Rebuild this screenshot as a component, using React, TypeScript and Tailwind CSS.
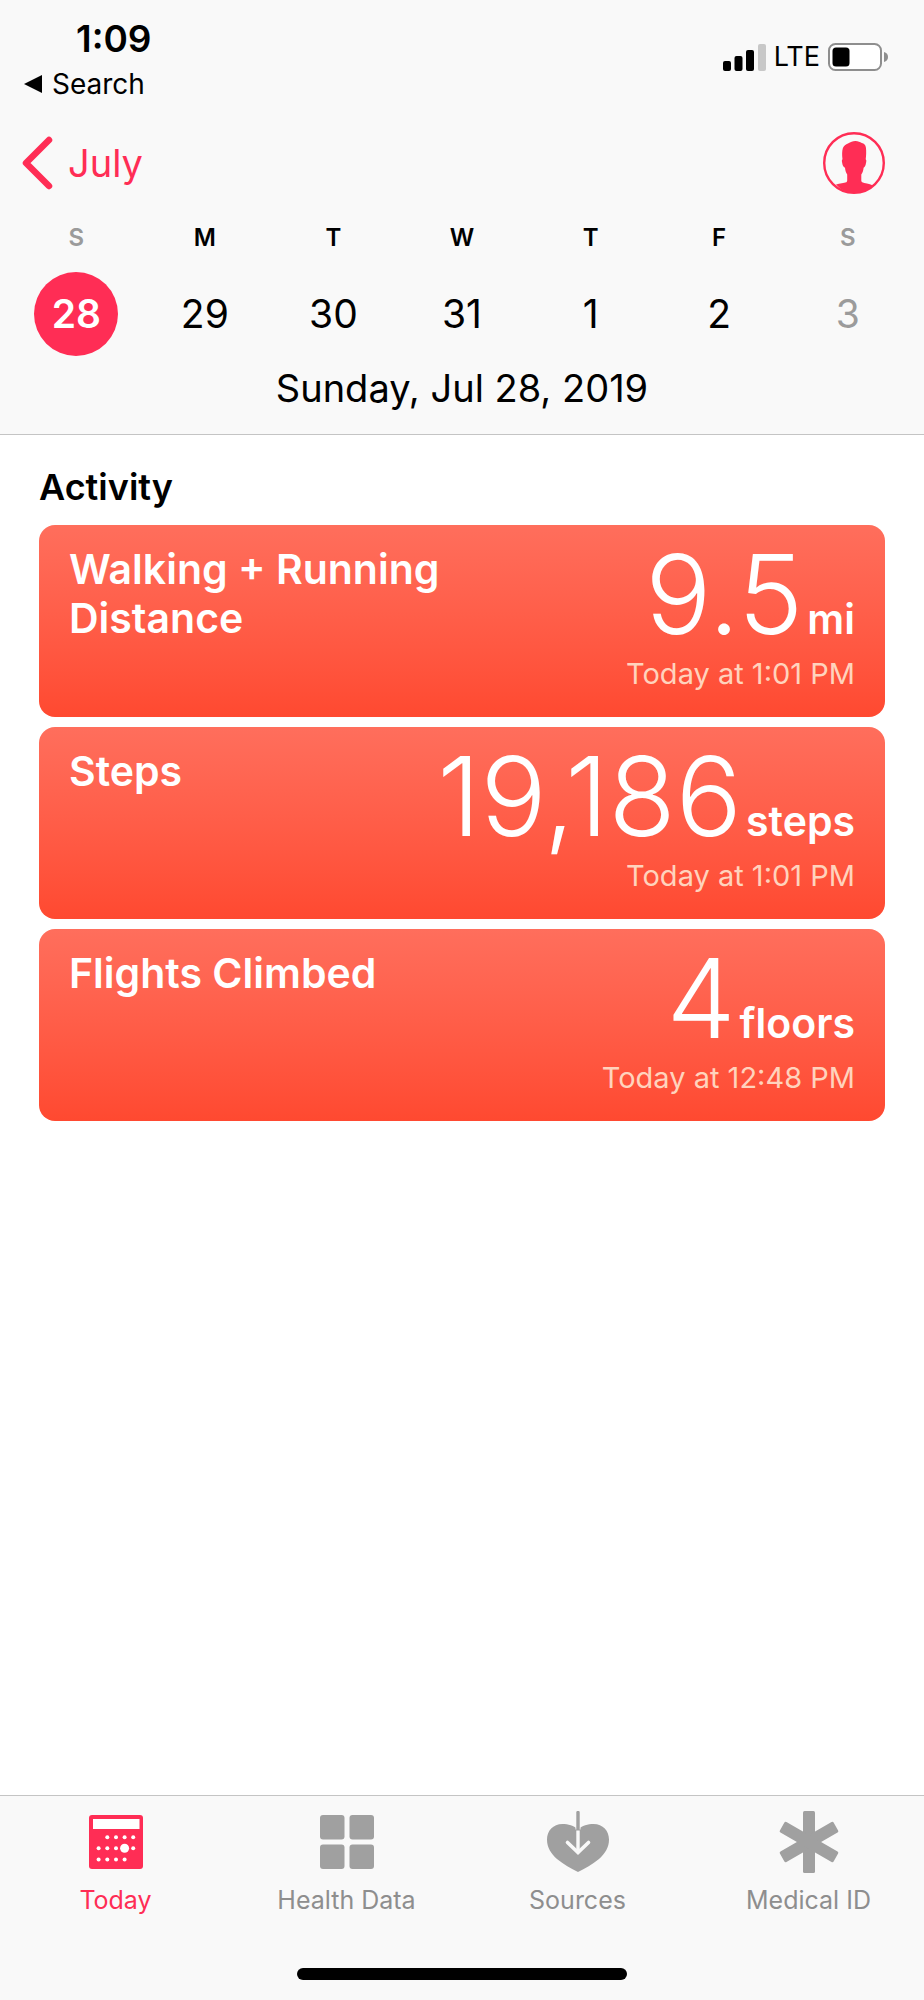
import React, { useState } from 'react';
import { clsx } from 'clsx';

interface Day {
  label: string;
  date: number;
  weekend?: boolean;
}

interface Metric {
  title: string;
  value: string;
  unit: string;
  time: string;
}

const DAYS: Day[] = [
  { label: 'S', date: 28, weekend: true },
  { label: 'M', date: 29 },
  { label: 'T', date: 30 },
  { label: 'W', date: 31 },
  { label: 'T', date: 1 },
  { label: 'F', date: 2 },
  { label: 'S', date: 3, weekend: true },
];

const METRICS: Metric[] = [
  { title: 'Walking + Running Distance', value: '9.5', unit: 'mi', time: 'Today at 1:01 PM' },
  { title: 'Steps', value: '19,186', unit: 'steps', time: 'Today at 1:01 PM' },
  { title: 'Flights Climbed', value: '4', unit: 'floors', time: 'Today at 12:48 PM' },
];

const SignalIcon = () => (
  <svg width="43" height="27" viewBox="0 0 43 27" aria-hidden="true">
    <rect x="0" y="17" width="8" height="10" rx="2" />
    <rect x="11.5" y="12" width="8" height="15" rx="2" />
    <rect x="23" y="6" width="8" height="21" rx="2" />
    <rect x="35" y="0" width="8" height="27" rx="2" fill="#c8c8c8" />
  </svg>
);

const BatteryIcon = () => (
  <svg width="60" height="28" viewBox="0 0 60 28" aria-hidden="true">
    <rect x="1" y="1" width="52" height="26" rx="6.5" fill="#fff" stroke="#8e8e8e" strokeWidth="2" />
    <rect x="4.5" y="4.5" width="17" height="19" rx="3.5" />
    <path d="M56 9c2.6.6 4 2.5 4 5s-1.4 4.4-4 5z" fill="#8e8e8e" />
  </svg>
);

const ProfileIcon = () => (
  <svg width="62" height="62" viewBox="0 0 62 62" aria-hidden="true">
    <circle cx="31" cy="31" r="29.8" fill="none" stroke="#ff2d55" strokeWidth="2.4" />
    <path
      d="M13 52.5c4-1.6 8-1.3 10.3-2.3.8-.4.9-1.2.9-2.2v-5.5c-1.3-2-1.9-4-2.2-6.8-1.7-.8-2.3-2.2-2.7-4.2-.4-1.9-.8-3.3.2-4.2-.5-4.3-.6-8.2.4-11.3 1-2.2 2.8-3.7 5.1-4.5 2.8-1.4 4.8-2.5 7.6-2.4 2.5.1 4.4.9 6.2 2 2.3.3 3.8 2 4.1 4.4.5 4 .3 8-.2 11.8 1 1 .6 2.3.2 4.2-.4 2-.9 3.4-2.3 4.2-.3 2.800-.9 4.800-2.300 6.800v5.500c0 1 .1 1.800.9 2.200 2.300 1 6.800 1.200 10.800 3.200-5 5-11 7.600-18.500 7.600s-14-3.500-18.500-8.500z"
      fill="#ff2d55"
    />
  </svg>
);

const TodayIcon = () => (
  <svg width="54" height="54" viewBox="0 0 54 54" aria-hidden="true">
    <rect width="54" height="54" rx="3" fill="#ff2d55" />
    <rect x="4" y="4" width="46.5" height="10" fill="#fff" />
    <g fill="#fff">
      {[18.3, 27, 35.6, 44.2].map((x) => (
        <circle key={x} cx={x} cy="22.3" r="2" />
      ))}
      {[9.6, 18.3, 27, 44.2].map((x) => (
        <circle key={x} cx={x} cy="33.3" r="2" />
      ))}
      <circle cx="35.6" cy="33.3" r="4.5" />
      {[9.6, 18.3, 27, 35.6].map((x) => (
        <circle key={x} cx={x} cy="44.5" r="2" />
      ))}
    </g>
  </svg>
);

const HealthDataIcon = () => (
  <svg width="54" height="54" viewBox="0 0 54 54" fill="#a0a0a0" aria-hidden="true">
    <rect width="24.5" height="24.5" rx="3" />
    <rect x="29.5" width="24.5" height="24.5" rx="3" />
    <rect y="29.5" width="24.5" height="24.5" rx="3" />
    <rect x="29.5" y="29.5" width="24.5" height="24.5" rx="3" />
  </svg>
);

const SourcesIcon = () => (
  <svg width="62" height="62" viewBox="0 0 62 62" aria-hidden="true">
    <path
      d="M31 18.5C27 14.5 21 13 15.5 13 6 13 0 20 0 28.5c0 8 4 14 10 19.5C16.5 53.5 24 57.5 31 61c7-3.5 14.5-7.5 21-13 6-5.5 10-11.5 10-19.5C62 20 56 13 46.5 13 41 13 35 14.5 31 18.5z"
      fill="#a0a0a0"
    />
    <path d="M31 1.5V18.5" stroke="#f9f9f9" strokeWidth="5" />
    <path d="M31 1.5V18.5" stroke="#a0a0a0" strokeWidth="3.4" strokeLinecap="round" />
    <path d="M31 19.5V41" stroke="#f9f9f9" strokeWidth="3.4" />
    <path d="M20.5 31.5 31 41.5l10.5-10" fill="none" stroke="#f9f9f9" strokeWidth="3.6" strokeLinecap="round" />
  </svg>
);

const MedicalIcon = () => (
  <svg width="62" height="62" viewBox="0 0 62 62" fill="#a0a0a0" aria-hidden="true">
    <rect x="25" y="0" width="12" height="62" rx="1.5" />
    <rect x="25" y="0" width="12" height="62" rx="1.5" transform="rotate(60 31 31)" />
    <rect x="25" y="0" width="12" height="62" rx="1.5" transform="rotate(-60 31 31)" />
  </svg>
);

const TABS = [
  { name: 'Today', icon: <TodayIcon /> },
  { name: 'Health Data', icon: <HealthDataIcon /> },
  { name: 'Sources', icon: <SourcesIcon /> },
  { name: 'Medical ID', icon: <MedicalIcon /> },
];

const MetricCard: React.FC<Metric> = ({ title, value, unit, time }) => (
  <article className="flex min-h-48 justify-between rounded-2xl bg-linear-to-b from-[#ff6e5c] to-[#ff4930] px-[30px] pt-5 text-white">
    <h3 className="max-w-[400px] text-[41px] leading-[49px] font-semibold">{title}</h3>
    <div className="pt-3.5 text-right whitespace-nowrap">
      <p className="flex items-baseline justify-end gap-1 leading-[70px]">
        <span className="text-[110px] font-light">{value}</span>
        <span className="text-[41px] font-semibold">{unit}</span>
      </p>
      <p className="text-[29px] leading-10 text-[#ffd3bd]">{time}</p>
    </div>
  </article>
);

export default function App() {
  const [selected, setSelected] = useState(28);
  const [tab, setTab] = useState('Today');

  return (
    <div className="flex min-h-screen flex-col bg-white font-['Inter',sans-serif] text-black">
      <header className="border-b border-[#c4c4c4] bg-[#f9f9f9]">
        {/* Status bar */}
        <div className="flex items-center justify-between pt-4 pr-9 pl-6">
          <div>
            <p className="pl-13 text-[37px] leading-[46px] font-semibold">1:09</p>
            <button type="button" className="flex items-center gap-2.5 text-[28px] leading-[44px]">
              <svg width="18" height="18" viewBox="0 0 18 18" aria-hidden="true">
                <path d="M18 0v18L0 9z" />
              </svg>
              Search
            </button>
          </div>
          <div className="flex items-center gap-2 pb-2">
            <SignalIcon />
            <span className="text-[27px] leading-8">LTE</span>
            <BatteryIcon />
          </div>
        </div>

        {/* Month navigation */}
        <div className="flex items-center justify-between pt-[26px] pr-[39px] pl-5">
          <button type="button" className="flex items-center gap-3.5 text-[38px] leading-[62px] text-[#ff2d55]">
            <svg width="34" height="54" viewBox="0 0 34 54" aria-hidden="true">
              <path
                d="M29 4 6 27l23 23"
                fill="none"
                stroke="#ff2d55"
                strokeWidth="6.5"
                strokeLinecap="round"
                strokeLinejoin="round"
              />
            </svg>
            July
          </button>
          <button type="button" aria-label="Profile">
            <ProfileIcon />
          </button>
        </div>

        {/* Week strip */}
        <div className="grid grid-cols-7 px-3 pt-[26px]">
          {DAYS.map((day) => (
            <button
              key={day.date}
              type="button"
              onClick={() => setSelected(day.date)}
              className={clsx('flex flex-col items-center gap-4', day.weekend && 'text-[#9b9b9b]')}
            >
              <span className="text-[24px] leading-9 font-semibold">{day.label}</span>
              <span
                className={clsx(
                  'flex size-21 items-center justify-center rounded-full text-[39px]',
                  selected === day.date && 'bg-[#ff2d55] font-semibold text-white'
                )}
              >
                {day.date}
              </span>
            </button>
          ))}
        </div>
        <p className="pt-2 pb-[22px] text-center text-[38px] leading-12">Sunday, Jul 28, 2019</p>
      </header>

      <main className="grow px-[39px] pt-7">
        <h2 className="text-[36px] leading-12 font-semibold">Activity</h2>
        <div className="flex flex-col gap-2.5 pt-3.5">
          {METRICS.map((metric) => (
            <MetricCard key={metric.title} {...metric} />
          ))}
        </div>
      </main>

      <footer className="border-t border-[#c4c4c4] bg-[#f9f9f9] pt-3 pb-5">
        <nav className="grid grid-cols-4">
          {TABS.map(({ name, icon }) => (
            <button
              key={name}
              type="button"
              onClick={() => setTab(name)}
              className={clsx(
                'flex flex-col items-center gap-1.5 text-[25px] leading-9',
                tab === name ? 'text-[#ff2d55]' : 'text-[#8e8e8e]'
              )}
            >
              <span className="flex h-17 items-center">{icon}</span>
              {name}
            </button>
          ))}
        </nav>
        <div className="mx-auto mt-[50px] h-3 w-[330px] rounded-full bg-black" />
      </footer>
    </div>
  );
}
